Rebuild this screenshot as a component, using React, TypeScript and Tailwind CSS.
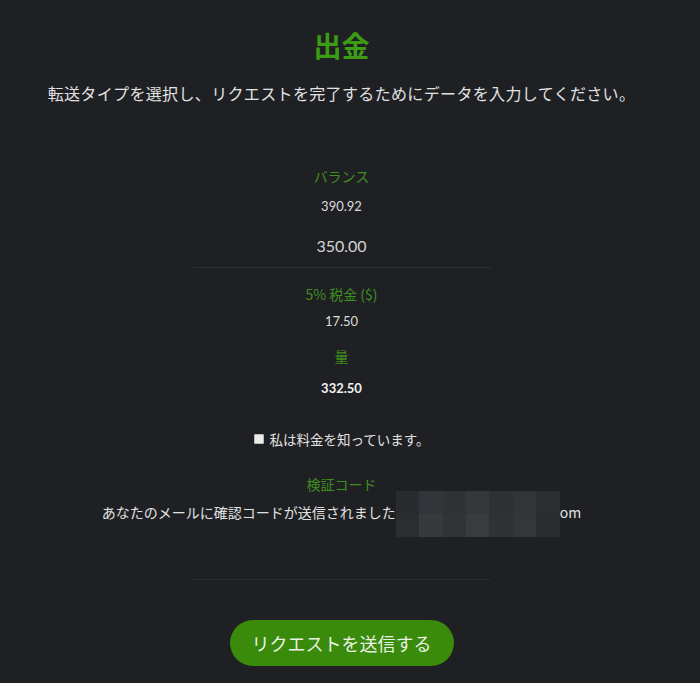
const jp = "font-['Noto_Sans_CJK_JP',sans-serif]"

const mosaic = [
  ['#2a2b2e', '#34353a', '#313236', '#36373b', '#2f3034', '#333438', '#2c2d30'],
  ['#2c2d31', '#38393d', '#323337', '#3a3b3f', '#303135', '#35363a', '#2b2c2f'],
]

function Label({ children, className = '' }: { children: React.ReactNode; className?: string }) {
  return (
    <div className={`text-[14px] leading-[20px] text-[#3f8f1f] ${jp} ${className}`}>{children}</div>
  )
}

export default function App() {
  return (
    <div className={`min-h-[683px] w-full bg-[#1f2023] ${jp}`}>
      <div className="flex flex-col items-center pr-[17px] pt-[27px]">
        <h1 className="text-[28px] font-bold leading-[36px] text-[#3c9c14]">出金</h1>
        <p className="mt-[18px] text-[16px] leading-[24px] tracking-[0.35px] text-[#e2e2e2]">
          転送タイプを選択し、リクエストを完了するためにデータを入力してください。
        </p>

        <Label className="mt-[61px]">バランス</Label>
        <div className="mt-[10px] font-['Lato',sans-serif] text-[13px] leading-[20px] text-[#dcdcdc]">390.92</div>
        <div className="mt-[18px] font-['Lato',sans-serif] text-[16px] leading-[24px] text-[#d4d4d4]">350.00</div>
        <div className="mt-[9px] h-px w-[298px] bg-[#2e2f33]" />

        <Label className="mt-[16px]">5% 税金 ($)</Label>
        <div className="mt-[7px] font-['Lato',sans-serif] text-[13px] leading-[20px] text-[#dcdcdc]">17.50</div>
        <Label className="mt-[15px]">量</Label>
        <div className="mt-[12px] font-['Lato',sans-serif] text-[13px] font-bold leading-[20px] text-[#f0f0f0]">332.50</div>

        <label className="mt-[31px] flex items-center gap-[6px] text-[13.5px] leading-[20px] text-[#e2e2e2]">
          <span className="inline-block h-[10px] w-[10px] rounded-[1px] border border-[#bbb] bg-[#ececec]" />
          私は料金を知っています。
        </label>

        <Label className="mt-[25px]">検証コード</Label>
        <p className="mt-[8px] text-[14px] leading-[20px] text-[#e2e2e2]">
          あなたのメールに確認コードが送信されました
          <span className="-my-[13px] inline-grid h-[46px] w-[164px] grid-cols-7 grid-rows-2 align-middle">
            {mosaic.flat().map((c, i) => (
              <span key={i} style={{ background: c }} />
            ))}
          </span>
          om
        </p>

        <div className="mt-[55px] h-px w-[298px] bg-[#2a2b2f]" />

        <button className="mt-[40px] h-[46px] w-[224px] rounded-full bg-[#3a8a0c] text-[18px] text-[#e9f2e2]">
          リクエストを送信する
        </button>
      </div>
    </div>
  )
}
